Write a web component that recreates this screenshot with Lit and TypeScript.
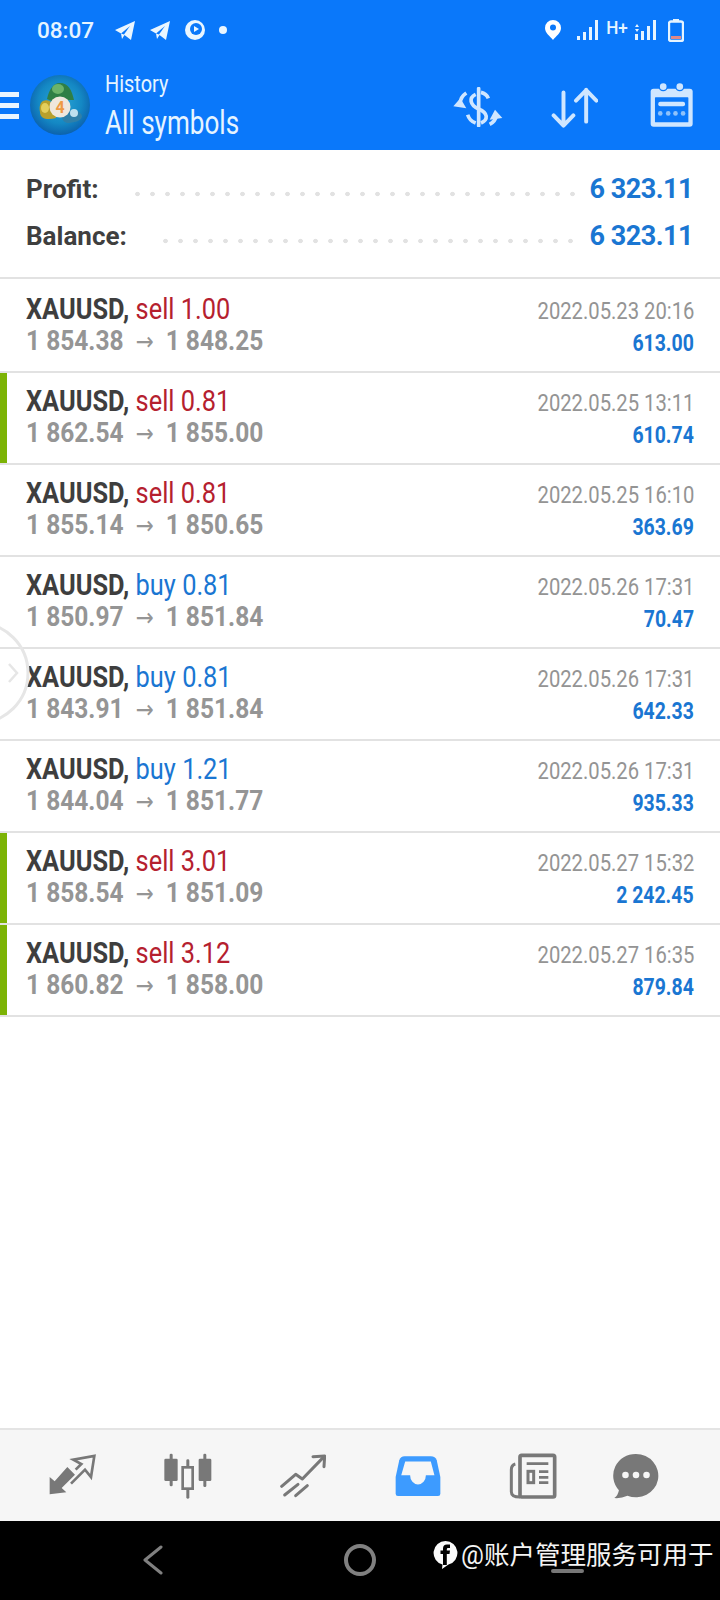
import { LitElement, css, html, svg } from 'lit'
import { customElement } from 'lit/decorators.js'

const deals = [
  { side: 'sell', lots: '1.00', from: '1 854.38', to: '1 848.25', time: '2022.05.23 20:16', profit: '613.00', mark: false },
  { side: 'sell', lots: '0.81', from: '1 862.54', to: '1 855.00', time: '2022.05.25 13:11', profit: '610.74', mark: true },
  { side: 'sell', lots: '0.81', from: '1 855.14', to: '1 850.65', time: '2022.05.25 16:10', profit: '363.69', mark: false },
  { side: 'buy', lots: '0.81', from: '1 850.97', to: '1 851.84', time: '2022.05.26 17:31', profit: '70.47', mark: false },
  { side: 'buy', lots: '0.81', from: '1 843.91', to: '1 851.84', time: '2022.05.26 17:31', profit: '642.33', mark: false },
  { side: 'buy', lots: '1.21', from: '1 844.04', to: '1 851.77', time: '2022.05.26 17:31', profit: '935.33', mark: false },
  { side: 'sell', lots: '3.01', from: '1 858.54', to: '1 851.09', time: '2022.05.27 15:32', profit: '2 242.45', mark: true },
  { side: 'sell', lots: '3.12', from: '1 860.82', to: '1 858.00', time: '2022.05.27 16:35', profit: '879.84', mark: true },
]

const telegram = svg`<path d="M1 10 L21 1 L17 20 L10.5 15 L8 19 L7 13.5 Z" fill="#eaf6ff"/><path d="M7 13.5 L16 6 L10 14.5Z" fill="#0a78fa"/>`

@customElement('app-root')
export class AppRoot extends LitElement {
  static styles = css`
    :host {
      display: block;
      width: 720px;
      height: 1600px;
      position: relative;
      overflow: hidden;
      background: #fff;
      font-family: Roboto, 'Liberation Sans', sans-serif;
    }
    .page { display: flex; flex-direction: column; height: 1600px; }

    .top { background: #0a78fa; height: 150px; flex: none; color: #e6f4ff; }
    .status { display: flex; align-items: center; height: 60px; padding: 0 36px 0 37px; }
    .clock { font-size: 22.5px; font-weight: 500; width: 77px; }
    .status-left { display: flex; align-items: center; gap: 13px; flex: 1; }
    .status-right { display: flex; align-items: center; gap: 6px; }
    .hplus { font-size: 19px; font-weight: 500; transform: scaleX(.9); margin-top: -5px; }

    .bar { display: flex; align-items: center; height: 90px; }
    .burger { display: flex; flex-direction: column; gap: 6px; width: 19px; margin-top: 1px; }
    .burger i { display: block; height: 5px; background: #eaf6ff; }
    .logo { margin-left: 10px; flex: none; }
    .titles { margin-left: 14px; flex: 1; display: flex; flex-direction: column; }
    .titles span { display: block; transform-origin: left center; white-space: nowrap; }
    .sub { font-size: 24px; line-height: 28px; margin-top: 3px; transform: scaleX(.83); }
    .main { font-size: 33px; line-height: 42px; margin-top: 4px; transform: scaleX(.79); }
    .actions { display: flex; align-items: center; padding-right: 27px; }
    .actions svg { display: block; }
    .a1 { margin-right: 48px; margin-top: 4px; }
    .a2 { margin-right: 52px; margin-top: 4px; }

    .summary { flex: none; height: 112px; border-bottom: 2px solid #e2e2e2; padding: 15px 27px 0 26px; }
    .sum-row { display: flex; align-items: center; height: 47px; }
    .sum-label { font-size: 26px; font-weight: 700; color: #3f3f3f; }
    .leader {
      flex: 1;
      height: 6px;
      margin: 10px 10px 0 31px;
      background: radial-gradient(circle at center, #e2e2e2 2px, transparent 2.6px) left center / 15px 6px repeat-x;
    }
    .sum-value { font-size: 27px; font-weight: 700; color: #1a76d2; letter-spacing: -.5px; }

    .deal {
      display: flex;
      justify-content: space-between;
      height: 90px;
      border-bottom: 2px solid #e2e2e2;
      padding: 0 26px;
    }
    .deal.mark { box-shadow: inset 7px 0 0 #7cb305; }
    .left, .right { display: flex; flex-direction: column; white-space: nowrap; }
    .left > div, .right > div { transform: scaleX(.86); }
    .left > div { transform-origin: left center; }
    .right { align-items: flex-end; }
    .right > div { transform-origin: right center; }
    .l1 { font-size: 29.5px; line-height: 32px; margin-top: 12px; color: #3e3e3e; }
    .l1 b { font-weight: 700; }
    .sell { color: #b5202e; }
    .buy { color: #1a76d2; }
    .l2 { font-size: 28.5px; line-height: 32px; font-weight: 700; color: #959595; }
    .arrow { font-weight: 400; font-size: 25px; font-family: 'DejaVu Sans', sans-serif; margin: 0 14px; }
    .when { font-size: 23.5px; line-height: 30px; margin-top: 15px; color: #949494; }
    .right > .gain { font-size: 24px; line-height: 30px; margin-top: 2px; font-weight: 700; color: #1a76d2; transform: scaleX(.81); }

    .list { flex: 1; padding-top: 2px; }

    .nav {
      flex: none;
      height: 91px;
      background: #f6f6f6;
      border-top: 2px solid #e4e4e4;
      display: grid;
      grid-template-columns: repeat(6, 115px);
      padding-left: 15px;
      align-items: center;
      justify-items: center;
    }
    .nav svg { display: block; }
    .nav .shift { margin-left: -23px; }

    .keys { flex: none; height: 79px; background: #000; display: flex; align-items: center; padding: 0 0 2px 143px; box-sizing: border-box; }
    .keys svg { display: block; }
    .home { margin-left: 181px; }

    .handle { position: absolute; left: 0; top: 620px; }
    .pill { position: absolute; left: 551px; top: 1569px; width: 33px; height: 4px; border-radius: 2px; background: #777; }
    .mark-text {
      position: absolute;
      left: 433px;
      top: 1538px;
      display: flex;
      align-items: center;
      gap: 3px;
      color: #f4f4f4;
      font-size: 25.5px;
      line-height: 34px;
      white-space: nowrap;
      font-family: Roboto, 'Noto Sans CJK SC', sans-serif;
    }
  `

  private logo() {
    return html`<svg class="logo" width="62" height="62" viewBox="0 0 62 62">
      <defs>
        <radialGradient id="lg" cx="50%" cy="45%" r="55%">
          <stop offset="0" stop-color="#2aa7d6"/>
          <stop offset=".65" stop-color="#1488c4"/>
          <stop offset="1" stop-color="#0c62ad"/>
        </radialGradient>
      </defs>
      <circle cx="31" cy="31" r="30" fill="url(#lg)"/>
      <path d="M31 9 C39 9 43 16 45 26 L36 26 L25 28 L18 25 C20 16 24 9 31 9Z" fill="#2f7f45"/>
      <ellipse cx="29" cy="15" rx="6" ry="5" fill="#6bb36a"/>
      <path d="M14 27 C20 24 25 30 26 36 L27 44 C20 46 11 46 11 38 C10 33 11 29 14 27Z" fill="#b7a02c"/>
      <ellipse cx="16" cy="34" rx="4" ry="5" fill="#e3cf5c"/>
      <path d="M33 42 C38 34 50 34 53 42 C53 47 44 49 38 49 C35 48 33 46 33 42Z" fill="#2f7fa8"/>
      <circle cx="45" cy="39" r="4" fill="#bfe0ee"/>
      <circle cx="31" cy="33" r="10.5" fill="#efe7dc"/>
      <text x="31" y="39" text-anchor="middle" font-size="16" font-weight="700" fill="#ee9a44" font-family="Roboto, sans-serif">4</text>
    </svg>`
  }

  private statusBar() {
    return html`<div class="status">
      <div class="clock">08:07</div>
      <div class="status-left">
        <svg width="22" height="21" viewBox="0 0 22 21">${telegram}</svg>
        <svg width="22" height="21" viewBox="0 0 22 21">${telegram}</svg>
        <svg width="22" height="22" viewBox="0 0 22 22">
          <circle cx="11" cy="11" r="10" fill="#eaf6ff"/>
          <circle cx="12" cy="10" r="6" fill="#0a78fa"/>
          <path d="M10 7 L15 10 L10 13Z" fill="#eaf6ff"/>
        </svg>
        <svg width="8" height="8" viewBox="0 0 8 8"><circle cx="4" cy="4" r="4" fill="#eaf6ff"/></svg>
      </div>
      <div class="status-right">
        <svg width="16" height="20" viewBox="0 0 16 20" style="margin-right:10px">
          <path d="M8 0 a8 8 0 0 1 8 8 c0 5 -5 8 -8 12 c-3 -4 -8 -7 -8 -12 a8 8 0 0 1 8 -8Z" fill="#fff"/>
          <circle cx="8" cy="7.5" r="3" fill="#0a78fa"/>
        </svg>
        <svg width="22" height="20" viewBox="0 0 22 20">
          <rect x="0" y="16" width="3" height="4" fill="#e6f4ff"/><rect x="6" y="12" width="3" height="8" fill="#e6f4ff"/>
          <rect x="12" y="7" width="3" height="13" fill="#e6f4ff"/><rect x="18" y="0" width="3" height="20" fill="#e6f4ff"/>
        </svg>
        <span class="hplus">H+</span>
        <svg width="22" height="20" viewBox="0 0 22 20">
          <path d="M2 4 L4 7 H0Z M2 12 L4 9 H0Z" fill="#e6f4ff"/>
          <rect x="0" y="14" width="3" height="6" fill="#e6f4ff"/><rect x="6" y="11" width="3" height="9" fill="#e6f4ff"/>
          <rect x="12" y="6" width="3" height="14" fill="#e6f4ff"/><rect x="18" y="0" width="3" height="20" fill="#e6f4ff"/>
        </svg>
        <svg width="16" height="23" viewBox="0 0 16 23" style="margin-left:5px">
          <rect x="5" y="0" width="6" height="3" fill="#e6f4ff"/>
          <rect x="1" y="2.5" width="14" height="19.5" rx="2" fill="none" stroke="#e6f4ff" stroke-width="2.4"/>
          <rect x="3" y="17" width="10" height="3" fill="#d88"/>
        </svg>
      </div>
    </div>`
  }

  private actions() {
    const c = '#cfe6ff'
    return html`<div class="actions">
      <svg class="a1" width="50" height="40" viewBox="278 252 150 120" fill="none" stroke=${c} stroke-width="11">
        <path d="M355 257 V368" stroke-width="11" stroke-linecap="round"/>
        <path d="M346 274 C325 284 328 306 355 318 C384 330 384 350 362 360"/>
        <path d="M362 268 C372 270 380 276 384 286"/>
        <path d="M322 335 C326 348 335 356 346 360"/>
        <path d="M318 270 C306 278 300 288 300 300"/>
        <path d="M279 310 L300 286 L318 316Z" fill=${c} stroke="none"/>
        <path d="M388 364 C400 358 406 350 408 338"/>
        <path d="M426 345 L404 320 L388 350Z" fill=${c} stroke="none"/>
      </svg>
      <svg class="a2" width="47" height="41" viewBox="570 250 143 124" fill="none" stroke=${c} stroke-width="12" stroke-linecap="round" stroke-linejoin="round">
        <path d="M608 266 V364 M578 336 L608 367 L638 336"/>
        <path d="M677 258 V355 M646 291 L677 259 L708 291"/>
      </svg>
      <svg width="43" height="46" viewBox="868 247 130 135">
        <rect x="870" y="265" width="127" height="115" rx="9" fill=${c}/>
        <rect x="883" y="291" width="101" height="76" rx="2" fill="#0a78fa"/>
        <circle cx="908" cy="259" r="14" fill="#0a78fa"/><circle cx="958" cy="259" r="14" fill="#0a78fa"/>
        <circle cx="908" cy="259" r="10" fill=${c}/><circle cx="958" cy="259" r="10" fill=${c}/>
        <rect x="893" y="305" width="81" height="13" rx="6" fill=${c}/>
        <g fill="#8fc2fa"><circle cx="899" cy="340" r="7"/><circle cx="923" cy="340" r="7"/><circle cx="945" cy="340" r="7"/><circle cx="968" cy="340" r="7"/></g>
      </svg>
    </div>`
  }

  private navIcons() {
    const g = '#787878'
    return html`<nav class="nav">
      <svg width="50" height="44" viewBox="145 103 150 132" fill="none" stroke=${g} stroke-width="8">
        <path d="M150 172 L165 185 L203 142 L226 165 L186 205 L200 218 L150 224Z" fill=${g} stroke="none"/>
        <path d="M228 150 L245 133 L221 120 L284 109 L274 172 L256 150 L214 192"/>
      </svg>
      <svg width="50" height="46" viewBox="488 93 150 138" fill=${g}>
        <rect x="508" y="95" width="9" height="98" rx="4"/><rect x="492" y="110" width="40" height="67" rx="4"/>
        <rect x="558" y="112" width="9" height="118" rx="4"/>
        <rect x="547" y="136" width="30" height="64" fill="#f6f6f6" stroke=${g} stroke-width="8"/>
        <rect x="609" y="95" width="9" height="100" rx="4"/><rect x="595" y="110" width="38" height="67" rx="4"/>
      </svg>
      <svg width="46" height="44" viewBox="838 96 138 130" fill="none" stroke=${g} stroke-width="9" stroke-linecap="round" stroke-linejoin="round">
        <path d="M843 192 L885 156 L905 170 L968 105"/>
        <path d="M937 103 L972 101 L970 133"/>
        <path d="M852 218 L892 186 M885 220 L920 190"/>
      </svg>
      <svg width="46" height="44" viewBox="103 98 140 128">
        <path d="M132 102 H212 Q226 102 230 114 L241 165 V216 Q241 223 234 223 H112 Q105 223 105 216 V165 L116 114 Q120 102 132 102Z" fill="#3d9bff"/>
        <path d="M134 118 H212 L223 160 H197 A24 28 0 0 1 149 160 H122Z" fill="#f6f6f6"/>
      </svg>
      <svg width="48" height="46" viewBox="447 92 144 138" fill="none" stroke=${g} stroke-width="11">
        <rect x="480" y="99" width="104" height="125" rx="5"/>
        <path d="M466 125 Q454 128 454 142 V208 Q454 224 480 224" stroke-width="9"/>
        <path d="M500 124 H565 M537 148 H565 M537 165 H565 M537 181 H565" stroke-width="8"/>
        <rect x="504" y="147" width="17" height="34" stroke-width="9"/>
      </svg>
      <svg class="shift" width="46" height="46" viewBox="758 92 140 138">
        <path d="M828 94 a68 66 0 1 1 -26 127 q-20 9 -40 7 q12 -10 14 -24 a68 66 0 0 1 52 -110Z" fill=${g}/>
        <circle cx="796" cy="158" r="10" fill="#f6f6f6"/><circle cx="828" cy="158" r="10" fill="#f6f6f6"/><circle cx="860" cy="158" r="10" fill="#f6f6f6"/>
      </svg>
    </nav>`
  }

  render() {
    return html`
      <div class="page">
        <header class="top">
          ${this.statusBar()}
          <div class="bar">
            <div class="burger"><i></i><i></i><i></i></div>
            ${this.logo()}
            <div class="titles">
              <span class="sub">History</span>
              <span class="main">All symbols</span>
            </div>
            ${this.actions()}
          </div>
        </header>

        <section class="summary">
          <div class="sum-row"><span class="sum-label">Profit:</span><span class="leader"></span><span class="sum-value">6 323.11</span></div>
          <div class="sum-row"><span class="sum-label">Balance:</span><span class="leader"></span><span class="sum-value">6 323.11</span></div>
        </section>

        <div class="list">
          ${deals.map(
            (d) => html`<div class="deal ${d.mark ? 'mark' : ''}">
              <div class="left">
                <div class="l1"><b>XAUUSD,</b> <span class=${d.side}>${d.side} ${d.lots}</span></div>
                <div class="l2">${d.from}<span class="arrow">→</span>${d.to}</div>
              </div>
              <div class="right">
                <div class="when">${d.time}</div>
                <div class="gain">${d.profit}</div>
              </div>
            </div>`
          )}
        </div>

        ${this.navIcons()}

        <div class="keys">
          <svg width="20" height="30" viewBox="0 0 20 30" fill="none" stroke="#808080" stroke-width="3" stroke-linecap="round" stroke-linejoin="round">
            <path d="M18 2 L2 15 L18 28"/>
          </svg>
          <svg class="home" width="32" height="32" viewBox="0 0 32 32"><circle cx="16" cy="16" r="14" fill="none" stroke="#808080" stroke-width="4"/></svg>
        </div>
      </div>

      <svg class="handle" width="34" height="106" viewBox="0 0 34 106" fill="none" stroke="#e6e6e6">
        <circle cx="-22" cy="53" r="50" stroke-width="3"/>
        <path d="M9 44 L17 53 L9 62" stroke-width="2.5"/>
      </svg>

      <div class="pill"></div>
      <div class="mark-text">
        <svg width="25" height="30" viewBox="0 0 25 30">
          <path d="M12.5 1 a12 12 0 0 1 3 23.6 L9 29 L9.5 24.6 A12 12 0 0 1 12.5 1Z" fill="#fafafa"/>
          <path d="M10 25 V14 H7.5 V10.5 H10 V8.5 Q10 4.5 14 4.5 H17 V8 H15 Q13.8 8 13.8 9.2 V10.5 H17 L16.5 14 H13.8 V25Z" fill="#000"/>
        </svg>
        <span>@账户管理服务可用于</span>
      </div>
    `
  }
}
